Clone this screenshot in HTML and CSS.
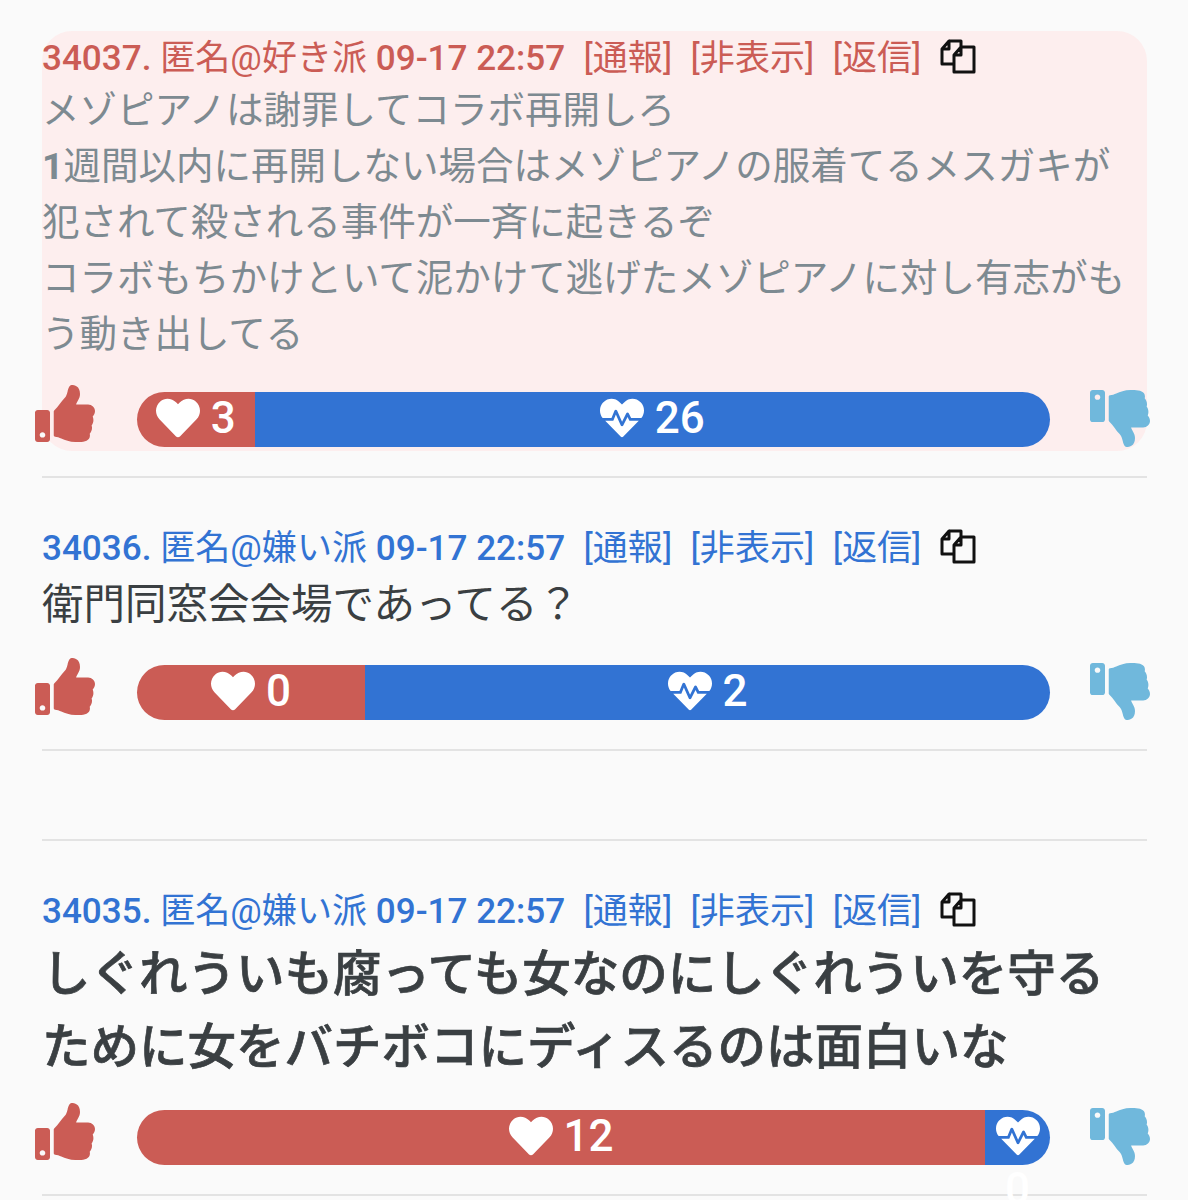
FILE: index.html
```html
<!DOCTYPE html>
<html lang="ja">
<head>
    <meta charset="UTF-8">
    <meta name="viewport" content="width=device-width, initial-scale=1.0">
    <title>コメント</title>
    <link rel="stylesheet" href="styles.css">
</head>
<body>
    <svg class="sprite" aria-hidden="true">
        <symbol id="i-thumb" viewBox="0 0 512 512" preserveAspectRatio="none"><path d="M104 224H24c-13.255 0-24 10.745-24 24v240c0 13.255 10.745 24 24 24h80c13.255 0 24-10.745 24-24V248c0-13.255-10.745-24-24-24zM64 472c-13.255 0-24-10.745-24-24s10.745-24 24-24 24 10.745 24 24-10.745 24-24 24zM384 81.452c0 42.416-25.97 66.208-33.277 94.548h101.723c33.397 0 59.397 27.746 59.553 58.098.084 17.938-7.546 37.249-19.439 49.197l-.11.11c9.836 23.337 8.237 56.037-9.308 79.469 8.681 25.895-.069 57.704-16.382 74.757 4.298 17.598 2.244 32.575-6.148 44.632C440.202 511.587 389.616 512 346.839 512l-2.845-.001c-48.287-.017-87.806-17.598-119.56-31.725-15.957-7.099-36.821-15.887-52.651-16.178-6.54-.12-11.783-5.457-11.783-11.998v-213.77c0-3.2 1.282-6.271 3.558-8.521 39.614-39.144 56.648-80.587 89.117-113.111 14.804-14.832 20.188-37.236 25.393-58.902C282.515 39.293 291.817 0 312 0c24 0 72 8 72 81.452z"/></symbol>
        <symbol id="i-heart" viewBox="0 0 512 512"><path d="M462.3 62.6C407.5 15.9 326 24.3 275.7 76.2L256 96.5l-19.7-20.3C186.1 24.3 104.5 15.9 49.7 62.6c-62.8 53.6-66.1 149.8-9.9 207.9l193.5 199.8c12.5 12.9 32.8 12.9 45.3 0l193.5-199.8c56.3-58.1 53-154.3-9.8-207.9z"/></symbol>
        <symbol id="i-pulse" viewBox="0 0 512 512"><path d="M320.2 243.8l-49.7 99.4c-6 12.1-23.4 11.7-28.9-.6l-56.9-126.3-30 71.7H60.6l182.5 186.5c7.1 7.3 18.6 7.3 25.7 0L451.4 288H342.3l-22.1-44.2zM473.7 73.9l-2.4-2.5c-51.5-52.6-135.8-52.6-187.4 0L256 100l-27.9-28.5c-51.5-52.7-135.9-52.7-187.4 0l-2.4 2.4C-10.4 123.7-12.5 203 31 256h102.4l35.9-86.2c5.4-12.9 23.6-13.2 29.4-.4l58.2 129.3 49-97.9c5.9-11.8 22.7-11.8 28.6 0l27.6 55.2H481c43.5-53 41.4-132.3-7.3-182.1z"/></symbol>
        <symbol id="i-copy" viewBox="0 0 36 36"><path d="M9 2H21V8M13 25H2V10L9 2V10H2M21 8H34V33H14V16L21 8V16H14"/></symbol>
    </svg>

    <article class="post post-hot">
        <div class="post-head">
            <span class="post-info">34037. <span class="post-name">匿名@好き派</span> 09-17 22:57</span>
            <a class="post-link">[通報]</a>
            <a class="post-link">[非表示]</a>
            <a class="post-link">[返信]</a>
            <svg class="icon-copy"><use href="#i-copy"/></svg>
        </div>
        <div class="post-body">メゾピアノは謝罪してコラボ再開しろ<br><b class="num">1</b>週間以内に再開しない場合はメゾピアノの服着てるメスガキが犯されて殺される事件が一斉に起きるぞ<br>コラボもちかけといて泥かけて逃げたメゾピアノに対し有志がもう動き出してる</div>
        <div class="vote-row">
            <svg class="thumb thumb-up"><use href="#i-thumb"/></svg>
            <div class="vote-bar">
                <div class="seg seg-like" style="width: 12.9%"><svg class="seg-icon"><use href="#i-heart"/></svg> 3</div>
                <div class="seg seg-dislike"><svg class="seg-icon"><use href="#i-pulse"/></svg> 26</div>
            </div>
            <svg class="thumb thumb-down"><use href="#i-thumb"/></svg>
        </div>
    </article>
    <hr class="sep">

    <article class="post post-blue post-mid">
        <div class="post-head">
            <span class="post-info">34036. <span class="post-name">匿名@嫌い派</span> 09-17 22:57</span>
            <a class="post-link">[通報]</a>
            <a class="post-link">[非表示]</a>
            <a class="post-link">[返信]</a>
            <svg class="icon-copy"><use href="#i-copy"/></svg>
        </div>
        <div class="post-body">衛門同窓会会場であってる？</div>
        <div class="vote-row">
            <svg class="thumb thumb-up"><use href="#i-thumb"/></svg>
            <div class="vote-bar">
                <div class="seg seg-like" style="width: 25%"><svg class="seg-icon"><use href="#i-heart"/></svg> 0</div>
                <div class="seg seg-dislike"><svg class="seg-icon"><use href="#i-pulse"/></svg> 2</div>
            </div>
            <svg class="thumb thumb-down"><use href="#i-thumb"/></svg>
        </div>
    </article>
    <hr class="sep">

    <div class="empty-post"></div>
    <hr class="sep">

    <article class="post post-blue post-big">
        <div class="post-head">
            <span class="post-info">34035. <span class="post-name">匿名@嫌い派</span> 09-17 22:57</span>
            <a class="post-link">[通報]</a>
            <a class="post-link">[非表示]</a>
            <a class="post-link">[返信]</a>
            <svg class="icon-copy"><use href="#i-copy"/></svg>
        </div>
        <div class="post-body">しぐれういも腐っても女なのにしぐれういを守るために女をバチボコにディスるのは面白いな</div>
        <div class="vote-row">
            <svg class="thumb thumb-up"><use href="#i-thumb"/></svg>
            <div class="vote-bar">
                <div class="seg seg-like" style="width: 92.9%"><svg class="seg-icon"><use href="#i-heart"/></svg> 12</div>
                <div class="seg seg-dislike"><svg class="seg-icon"><use href="#i-pulse"/></svg> 0</div>
            </div>
            <svg class="thumb thumb-down"><use href="#i-thumb"/></svg>
        </div>
    </article>
    <hr class="sep">
</body>
</html>
```

FILE: styles.css
```css
* {
    margin: 0;
    padding: 0;
    box-sizing: border-box;
}

html, body {
    height: 1200px;
    overflow: hidden;
}

body {
    font-family: Roboto, 'Noto Sans CJK JP', sans-serif;
    background: #fafafa;
    color: #3a3f42;
    padding: 31px 41px 0 42px;
}

.sprite {
    display: none;
}

.post {
    border-radius: 30px;
    padding-bottom: 4px;
}

.post-hot {
    background: #fdeeee;
    color: #7d8a91;
}

.post-head {
    display: flex;
    align-items: center;
    height: 47px;
    font-size: 35.1px;
    color: #cb5c55;
}

.post-blue .post-head {
    color: #3273d3;
}

.post-info {
    font-weight: 500;
    margin-right: 18.3px;
    white-space: nowrap;
}

.post-name {
    font-weight: 400;
}

.post-link {
    margin-right: 18.3px;
    white-space: nowrap;
}

.icon-copy {
    width: 36px;
    height: 36px;
    fill: none;
    stroke: #111;
    stroke-width: 3;
    stroke-linejoin: round;
    margin-top: 5px;
}

.post-body {
    font-size: 37.5px;
    line-height: 56px;
    padding-top: 4px;
}

.num {
    font-weight: 700;
}

.post-mid .post-body {
    font-size: 41.5px;
    padding-top: 9px;
}

.post-big .post-body {
    font-size: 48.5px;
    font-weight: 500;
    -webkit-text-stroke: 0.7px #3a3f42;
    line-height: 73px;
    padding-top: 7px;
}

.vote-row {
    display: flex;
    align-items: flex-start;
    gap: 41px;
    margin: 23px -3px 0 -7px;
}

.post-mid .vote-row {
    margin-top: 25px;
}

.post-big .vote-row {
    margin-top: 19px;
}

.thumb {
    flex: none;
    width: 60px;
    height: 57px;
}

.thumb-up {
    fill: #cb5c55;
}

.thumb-down {
    fill: #70b8dc;
    transform: scaleY(-1);
    margin-top: 5px;
}

.vote-bar {
    flex: 1;
    display: flex;
    height: 55px;
    margin: 7px -1px 0 1px;
    color: #fff;
    font-size: 44px;
    font-weight: 500;
    line-height: 53px;
    text-align: center;
}

.seg {
    height: 55px;
}

.seg-like {
    flex: none;
    background: #cb5c55;
    border-radius: 28px 0 0 28px;
}

.seg-dislike {
    flex: 1;
    min-width: 0;
    background: #3273d3;
    border-radius: 0 28px 28px 0;
}

.seg-icon {
    width: 44px;
    height: 44px;
    fill: #fff;
    vertical-align: -7px;
}

.sep {
    border: none;
    border-top: 2px solid #e3e3e3;
    margin: 25px 0 43px;
}

.empty-post {
    height: 20px;
}
```
